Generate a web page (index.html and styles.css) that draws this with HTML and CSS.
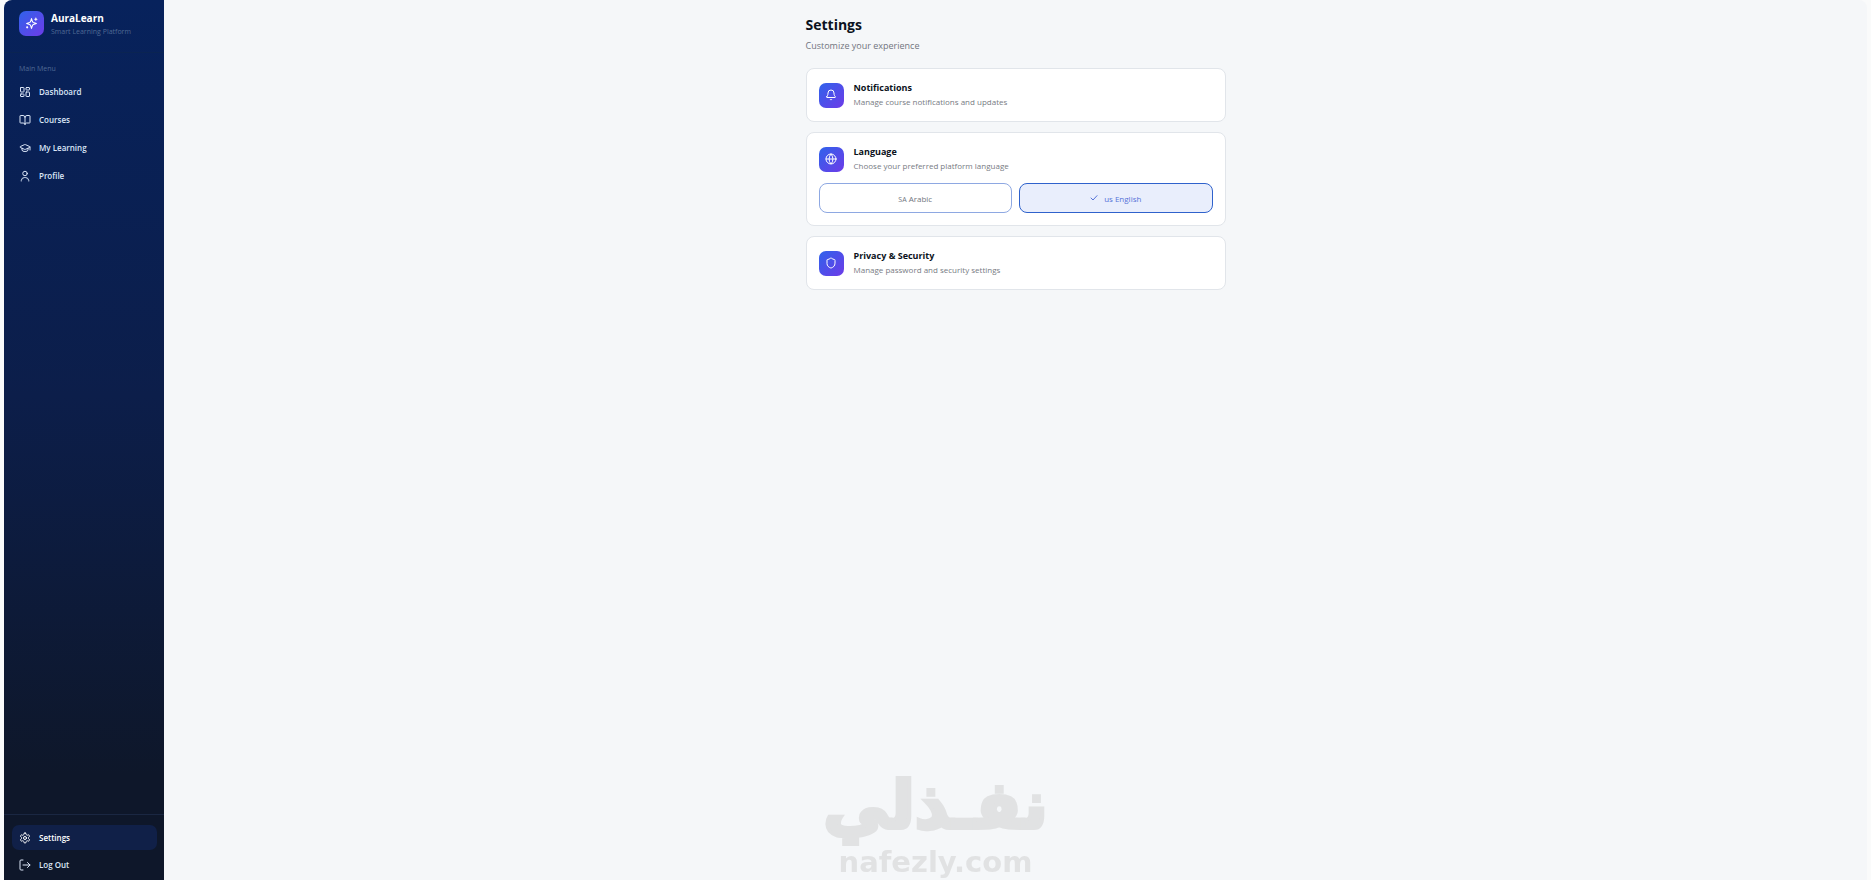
FILE: index.html
```
<!DOCTYPE html>
<html lang="en">
<head>
    <meta charset="UTF-8">
    <title>AuraLearn - Settings</title>
    <link rel="stylesheet" href="styles.css">
</head>
<body>
    <div class="app">
        <aside class="sidebar">
            <div class="brand">
                <span class="tile">
                    <svg class="spark" viewBox="0 0 24 24"><path d="M12 3l1.8 5.400a3 3 0 0 0 1.800 1.800L21 12l-5.400 1.800a3 3 0 0 0-1.800 1.800L12 21l-1.800-5.400a3 3 0 0 0-1.800-1.800L3 12l5.400-1.800a3 3 0 0 0 1.800-1.800z"/><path d="M20 2v4M18 4h4"/><circle cx="4" cy="19" r="1"/></svg>
                </span>
                <div>
                    <div class="brand-name">AuraLearn</div>
                    <div class="brand-sub">Smart Learning Platform</div>
                </div>
            </div>
            <nav class="menu">
                <div class="menu-title">Main Menu</div>
                <a href="#" class="item">
                    <svg viewBox="0 0 24 24"><rect x="3" y="3" width="7" height="9" rx="1"/><rect x="14" y="3" width="7" height="5" rx="1"/><rect x="14" y="12" width="7" height="9" rx="1"/><rect x="3" y="16" width="7" height="5" rx="1"/></svg>
                    Dashboard
                </a>
                <a href="#" class="item">
                    <svg viewBox="0 0 24 24"><path d="M12 7v14"/><path d="M3 18a1 1 0 0 1-1-1V4a1 1 0 0 1 1-1h5a4 4 0 0 1 4 4 4 4 0 0 1 4-4h5a1 1 0 0 1 1 1v13a1 1 0 0 1-1 1h-6a3 3 0 0 0-3 3 3 3 0 0 0-3-3z"/></svg>
                    Courses
                </a>
                <a href="#" class="item">
                    <svg viewBox="0 0 24 24"><path d="M21.4 10.9a1 1 0 0 0 0-1.8l-8.6-3.9a2 2 0 0 0-1.6 0L2.6 9.1a1 1 0 0 0 0 1.8l8.6 3.9a2 2 0 0 0 1.6 0z"/><path d="M22 10v6"/><path d="M6 12.5V16a6 3 0 0 0 12 0v-3.5"/></svg>
                    My Learning
                </a>
                <a href="#" class="item">
                    <svg viewBox="0 0 24 24"><circle cx="12" cy="7" r="4.5"/><path d="M4.500 22v-1a7 7 0 0 1 7-6h1a7 7 0 0 1 7 6v1"/></svg>
                    Profile
                </a>
            </nav>
            <div class="menu-bottom">
                <a href="#" class="item active">
                    <svg viewBox="0 0 24 24"><path d="M12.2 2h-.4a2 2 0 0 0-2 2v.2a2 2 0 0 1-1 1.700l-.4.300a2 2 0 0 1-2 0l-.2-.1a2 2 0 0 0-2.700.7l-.2.400a2 2 0 0 0 .7 2.700l.2.1a2 2 0 0 1 1 1.700v.5a2 2 0 0 1-1 1.800l-.2.1a2 2 0 0 0-.7 2.700l.2.400a2 2 0 0 0 2.700.7l.2-.1a2 2 0 0 1 2 0l.4.300a2 2 0 0 1 1 1.700v.2a2 2 0 0 0 2 2h.4a2 2 0 0 0 2-2v-.2a2 2 0 0 1 1-1.700l.4-.3a2 2 0 0 1 2 0l.2.1a2 2 0 0 0 2.700-.7l.2-.4a2 2 0 0 0-.7-2.700l-.2-.1a2 2 0 0 1-1-1.800v-.5a2 2 0 0 1 1-1.700l.2-.1a2 2 0 0 0 .7-2.700l-.2-.4a2 2 0 0 0-2.700-.7l-.2.1a2 2 0 0 1-2 0l-.4-.3a2 2 0 0 1-1-1.700V4a2 2 0 0 0-2-2z"/><circle cx="12" cy="12" r="3"/></svg>
                    Settings
                </a>
                <a href="#" class="item">
                    <svg viewBox="0 0 24 24"><path d="M8 22H4a2 2 0 0 1-2-2V4a2 2 0 0 1 2-2h4"/><path d="M8 12h14"/><path d="M17 7l5 5-5 5"/></svg>
                    Log Out
                </a>
            </div>
        </aside>

        <main class="main">
            <div class="content">
                <h1>Settings</h1>
                <p class="lead">Customize your experience</p>

                <section class="card">
                    <div class="card-head">
                        <span class="tile">
                            <svg viewBox="0 0 24 24"><path d="M10.300 21a2 2 0 0 0 3.400 0"/><path d="M3.300 15.300A1 1 0 0 0 4 17h16a1 1 0 0 0 .7-1.700C19.400 14 18 12.500 18 8A6 6 0 0 0 6 8c0 4.500-1.400 6-2.700 7.300z"/></svg>
                        </span>
                        <div>
                            <h2>Notifications</h2>
                            <p>Manage course notifications and updates</p>
                        </div>
                    </div>
                </section>

                <section class="card">
                    <div class="card-head">
                        <span class="tile">
                            <svg viewBox="0 0 24 24"><circle cx="12" cy="12" r="10"/><path d="M12 2a14.500 14.500 0 0 0 0 20 14.500 14.500 0 0 0 0-20"/><path d="M2 12h20"/></svg>
                        </span>
                        <div>
                            <h2>Language</h2>
                            <p>Choose your preferred platform language</p>
                        </div>
                    </div>
                    <div class="langs">
                        <button type="button" class="lang"><span><small>SA</small> Arabic</span></button>
                        <button type="button" class="lang selected">
                            <svg viewBox="0 0 24 24"><path d="M21 5L9 18l-6-6"/></svg>
                            <span>us English</span>
                        </button>
                    </div>
                </section>

                <section class="card">
                    <div class="card-head">
                        <span class="tile">
                            <svg viewBox="0 0 24 24"><path d="M20 13c0 5-3.500 7.500-7.700 9a1 1 0 0 1-.6 0C7.500 20.500 4 18 4 13V6a1 1 0 0 1 1-1c2 0 4.500-1.200 6.200-2.700a1.200 1.200 0 0 1 1.600 0C14.500 3.800 17 5 19 5a1 1 0 0 1 1 1z"/></svg>
                        </span>
                        <div>
                            <h2>Privacy &amp; Security</h2>
                            <p>Manage password and security settings</p>
                        </div>
                    </div>
                </section>
            </div>
        </main>
    </div>

    <div class="watermark">
        <div class="wm-ar" lang="ar" dir="rtl">نفـذلي</div>
        <div class="wm-en">nafezly.com</div>
    </div>
</body>
</html>
```

FILE: styles.css
```
* {
    box-sizing: border-box;
}
body {
    margin: 0;
    padding: 0 4px;
    background: #fafbfb;
    font-family: "Open Sans", "Noto Sans", sans-serif;
    font-size: 8px;
    color: #0b1220;
}
h1, h2, p {
    margin: 0;
}
svg {
    fill: none;
    stroke: currentColor;
    stroke-width: 2;
    stroke-linecap: round;
    stroke-linejoin: round;
    flex: none;
}
.app {
    display: flex;
    min-height: 100vh;
    background: #f5f7f9;
    border-radius: 8px 8px 0 0;
    overflow: hidden;
}

/* sidebar */
.sidebar {
    width: 160px;
    flex: none;
    display: flex;
    flex-direction: column;
    background: linear-gradient(180deg, #07225c 0%, #0c1e4a 45%, #0e172a 88%);
    color: #dbe6f7;
}
.brand {
    display: flex;
    align-items: center;
    gap: 7px;
    height: 53px;
    padding: 0 15px 6px;
    border-bottom: 1px solid #0a2452;
}
.tile {
    display: flex;
    align-items: center;
    justify-content: center;
    flex: none;
    width: 25px;
    height: 25px;
    border-radius: 7px;
    background: linear-gradient(135deg, #2f63eb, #6d3be8);
    color: #fff;
}
.tile svg {
    width: 12px;
    height: 12px;
}
.tile .spark {
    width: 13px;
    height: 13px;
}
.brand-name {
    padding-top: 2px;
    font-size: 10px;
    line-height: 15px;
    font-weight: 700;
    color: #fff;
}
.brand-sub {
    font-size: 7px;
    line-height: 12px;
    color: #506994;
}
.menu {
    display: flex;
    flex-direction: column;
    gap: 3px;
    padding: 9px 7px 9px 8px;
}
.menu-title {
    padding: 0 7px;
    font-size: 7px;
    line-height: 14px;
    color: #506994;
}
.item {
    display: flex;
    align-items: center;
    gap: 8px;
    height: 25px;
    padding: 0 7px;
    border-radius: 7px;
    color: #dbe6f7;
    font-size: 8px;
    font-weight: 600;
    text-decoration: none;
}
.item svg {
    width: 12px;
    height: 12px;
}
.item.active {
    background: #102048;
    color: #fff;
}
.menu-bottom {
    display: flex;
    flex-direction: column;
    gap: 2px;
    margin-top: auto;
    padding: 10px 7px 3px 8px;
    border-top: 1px solid #1a2742;
}

/* settings */
.main {
    flex: 1;
    padding: 15px;
}
.content {
    max-width: 420px;
    margin: 0 auto;
}
h1 {
    font-size: 14px;
    line-height: 20px;
    font-weight: 700;
}
.lead {
    margin-bottom: 12px;
    font-size: 9px;
    line-height: 21px;
    color: #71757e;
}
.card {
    margin-bottom: 10px;
    padding: 12px;
    background: #fff;
    border: 1px solid #e1e5ea;
    border-radius: 8px;
}
.card-head {
    display: flex;
    align-items: center;
    gap: 10px;
}
h2 {
    font-size: 9px;
    line-height: 14px;
    font-weight: 700;
}
.card-head p {
    font-size: 8px;
    line-height: 14px;
    color: #777b83;
}
.langs {
    display: grid;
    grid-template-columns: 1fr 1fr;
    gap: 7px;
    margin-top: 10px;
}
.lang {
    display: flex;
    align-items: center;
    justify-content: center;
    gap: 6px;
    height: 30px;
    padding: 0;
    background: #fff;
    border: 1px solid #8ea8e2;
    border-radius: 8px;
    font-family: inherit;
    font-size: 8px;
    color: #71757e;
}
.lang small {
    font-size: 7px;
}
.lang svg {
    width: 8px;
    height: 8px;
    stroke-width: 3;
}
.lang.selected {
    background: #e9eefc;
    border-color: #2f62cc;
    color: #5673d8;
}

/* watermark */
.watermark {
    position: fixed;
    left: 0;
    right: 0;
    bottom: 0;
    text-align: center;
    color: #e1e2e3;
    font-weight: 700;
    pointer-events: none;
}
.wm-ar {
    font-family: "DejaVu Sans", sans-serif;
    font-size: 66px;
    line-height: 76px;
    -webkit-text-stroke: 4px #e1e2e3;
}
.wm-en {
    font-family: "DejaVu Sans", sans-serif;
    font-size: 29px;
    line-height: 36px;
}
```
